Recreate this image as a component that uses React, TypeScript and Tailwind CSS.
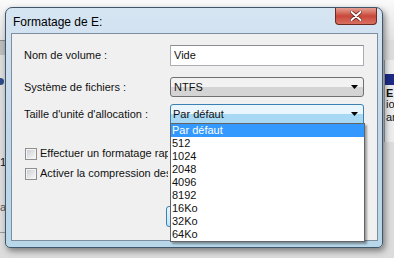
// Boîte de dialogue "Formatage de E:" style Vista avec la liste déroulante ouverte
import React, { FC } from "react";

const tailles = ["512", "1024", "2048", "4096", "8192", "16Ko", "32Ko", "64Ko"];

const Arrow: FC = () => (
  <svg width="7" height="4" viewBox="0 0 7 4" className="block">
    <path d="M0 0 H7 L3.5 4 Z" fill="#000" />
  </svg>
);

// le texte s'arrête au bord de la liste ouverte
const Checkbox: FC<{ label: string }> = ({ label }) => (
  <div className="flex items-center h-[13px]">
    <div className="w-[12px] h-[12px] ml-[1px] border border-[#8e8f8f] bg-[#f4f4f4] p-[1px]">
      <div className="w-full h-full bg-gradient-to-br from-[#cbcfd5] to-[#f7f7f7]" />
    </div>
    <span className="ml-[3px] w-[128px] overflow-hidden whitespace-nowrap">{label}</span>
  </div>
);

const App: FC = () => {
  return (
    <div
      className="relative w-[394px] h-[258px] overflow-hidden bg-[#dcdcdc] text-[11px] text-[#111]"
      style={{ fontFamily: '"Liberation Sans", Arial, sans-serif' }}
    >
      {/* fond du bureau */}
      <div className="absolute inset-x-0 top-0 h-[40px] bg-gradient-to-b from-[#fafafa] to-[#e2e2e2]" />
      <div className="absolute left-0 top-[40px] w-[6px] h-[1px] bg-[#8a8a8a]" />
      <div className="absolute left-0 top-[41px] w-[6px] h-[14px] bg-[#bdbdbd]" />
      <div className="absolute left-0 top-[78px] w-[4px] h-[7px] rounded-r bg-[#2a4a88]" />
      <div className="absolute left-0 top-[157px] leading-none">1</div>
      <div className="absolute left-0 top-[202px] leading-none text-[#555]">a</div>
      <div className="absolute left-0 top-[232px] w-[6px] h-[1px] bg-[#9a9a9a]" />
      <div className="absolute left-[384px] top-[60px] w-[10px] h-[82px] bg-[#ececec] border-l border-[#9aa6b2] overflow-hidden flex flex-col pl-[1px]">
        <div className="mt-[14px] h-[11px] -ml-[1px] bg-[#1d2a86]" />
        <span className="mt-[3px] leading-[10px] font-bold">E:</span>
        <span className="leading-[12px]">io</span>
        <span className="leading-[14px]">ar</span>
      </div>

      {/* fenêtre */}
      <div className="absolute left-[5px] top-[7px] w-[378px] h-[241px] rounded-t-[7px] rounded-b-[5px] border border-[#3f566b] bg-gradient-to-b from-[#d6e5f2] via-[#c2d7ea] to-[#b7d7e8] shadow-[2px_3px_6px_rgba(0,0,0,0.45)]">
        <div className="relative h-[25px] flex items-center pl-[7px] pt-[3px] text-[12px] text-black">
          Formatage de E:
          <div className="absolute left-[329px] top-0 w-[42px] h-[17px] rounded-b-[4px] border border-t-0 border-[#6b2a22] bg-gradient-to-b from-[#e4a093] via-[#c9473a] to-[#d87060] flex items-center justify-center">
            <svg width="12" height="10" viewBox="0 0 12 10">
              <path d="M1.5 1 L10.5 9 M10.5 1 L1.5 9" stroke="#5a1a12" strokeWidth="3.4" strokeLinecap="round" />
              <path d="M1.5 1 L10.5 9 M10.5 1 L1.5 9" stroke="#ffffff" strokeWidth="2" strokeLinecap="round" />
            </svg>
          </div>
        </div>

        {/* zone cliente */}
        <div className="relative ml-[5px] w-[367px] h-[208px] border border-[#7d8ea0] bg-[#f0f0f0] px-[12px]">
          <div className="flex items-center h-[21px] mt-[11px]">
            <span className="w-[146px]">Nom de volume :</span>
            <div className="w-[194px] h-[21px] border border-[#abadb3] border-t-[#8a8d94] bg-white flex items-center pl-[3px]">
              Vide
            </div>
          </div>
          <div className="flex items-center h-[20px] mt-[11px]">
            <span className="w-[146px]">Système de fichiers :</span>
            <div className="w-[194px] h-[20px] rounded-[3px] border border-[#707070] bg-gradient-to-b from-[#f2f2f2] from-50% to-[#d4d4d4] to-50% flex items-center justify-between pl-[3px] pr-[5px]">
              <span>NTFS</span>
              <Arrow />
            </div>
          </div>
          <div className="flex items-center h-[20px] mt-[7px]">
            <span className="w-[146px] whitespace-nowrap">Taille d'unité d'allocation :</span>
            <div className="w-[194px] h-[20px] rounded-t-[3px] border border-[#3c7fb1] bg-gradient-to-b from-[#eaf6fd] from-50% to-[#a7d9f5] to-50% flex items-center justify-between pl-[2px] pr-[5px]">
              <span>Par défaut</span>
              <Arrow />
            </div>
          </div>

          <div className="flex flex-col gap-[7px] mt-[23px]">
            <Checkbox label="Effectuer un formatage rapide" />
            <Checkbox label="Activer la compression des fichiers et dossiers" />
          </div>

          <div className="mt-[26px] ml-[142px] w-[75px] h-[21px] rounded-[3px] border border-[#3c7fb1] bg-gradient-to-b from-[#eaf6fd] to-[#bee6fd]" />

          {/* liste déroulante ouverte */}
          <div className="absolute left-[158px] top-[89px] w-[195px] border border-[#646464] bg-white shadow-[2px_2px_2px_rgba(0,0,0,0.35)]">
            <div className="h-[13px] leading-[13px] pl-[1px] bg-[#3399ff] text-white">Par défaut</div>
            {tailles.map((t, i) => (
              <div className="h-[13px] leading-[13px] pl-[1px]" key={i}>
                {t}
              </div>
            ))}
          </div>
        </div>
      </div>
    </div>
  );
};

export default App;
